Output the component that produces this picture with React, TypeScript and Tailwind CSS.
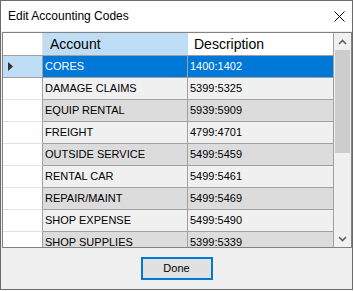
import React from "react";

// rows shown in the accounting codes grid
const rows = [
  { account: "CORES", desc: "1400:1402" },
  { account: "DAMAGE CLAIMS", desc: "5399:5325" },
  { account: "EQUIP RENTAL", desc: "5939:5909" },
  { account: "FREIGHT", desc: "4799:4701" },
  { account: "OUTSIDE SERVICE", desc: "5499:5459" },
  { account: "RENTAL CAR", desc: "5499:5461" },
  { account: "REPAIR/MAINT", desc: "5499:5469" },
  { account: "SHOP EXPENSE", desc: "5499:5490" },
  { account: "SHOP SUPPLIES", desc: "5399:5339" },
];

function Chevron({ down }: { down?: boolean }) {
  return (
    <svg width="9" height="6" viewBox="0 0 9 6">
      <polyline
        points={down ? "1,1 4.5,4.5 8,1" : "1,5 4.5,1.5 8,5"}
        fill="none"
        stroke="#606060"
        strokeWidth="1.6"
      />
    </svg>
  );
}

export default function App() {
  return (
    <div className="w-[354px] h-[291px] bg-white font-['Liberation_Sans',Arial,sans-serif]">
      <div className="w-[353px] h-[290px] border border-[#6b6b6b] bg-[#f0f0f0] flex flex-col">
        {/* title bar */}
        <div className="h-[30px] bg-white flex items-center justify-between pl-[7px] pr-[7px] shrink-0">
          <span className="text-[12px] text-black leading-none">Edit Accounting Codes</span>
          <svg width="11" height="11" viewBox="0 0 11 11">
            <path d="M0.5 0.5 L10.5 10.5 M10.5 0.5 L0.5 10.5" stroke="#000" strokeWidth="1" />
          </svg>
        </div>

        {/* grid */}
        <div className="mt-[1px] ml-[1px] h-[216px] w-[350px] border border-[#828282] bg-[#f0f0f0] flex shrink-0">
          <div className="w-[331px] h-full overflow-hidden">
            {/* header */}
            <div className="flex h-[23px] border-b border-[#a0a0a0] text-[14px] text-black">
              <div className="w-[40px] bg-white border-r border-[#e3e3e3]" />
              <div className="w-[145px] bg-[#bfddf5] border-r border-[#bfddf5] pl-[7px] flex items-center">
                Account
              </div>
              <div className="w-[146px] bg-white border-r border-[#a0a0a0] pl-[6px] flex items-center">
                Description
              </div>
            </div>
            {rows.map((r, i) => {
              const selected = i === 0;
              const bg = selected ? "bg-[#0078d7] text-white" : i % 2 === 0 ? "bg-[#dcdcdc] text-black" : "bg-[#f0f0f0] text-black";
              return (
                <div key={r.account} className="flex h-[22px] text-[11px]">
                  <div
                    className={`w-[40px] border-r border-[#a0a0a0] border-b flex items-center pl-[5px] ${
                      selected ? "bg-[#bfddf5] border-b-[#a0a0a0]" : "bg-white border-b-[#e3e3e3]"
                    }`}
                  >
                    {selected && (
                      <svg width="5" height="9" viewBox="0 0 5 9">
                        <path d="M0 0 L5 4.5 L0 9 Z" fill="#333" />
                      </svg>
                    )}
                  </div>
                  <div className={`w-[145px] border-r border-b border-[#a0a0a0] pl-[2px] flex items-center ${bg}`}>
                    {r.account}
                  </div>
                  <div className={`w-[146px] border-r border-b border-[#a0a0a0] pl-[2px] flex items-center ${bg}`}>
                    {r.desc}
                  </div>
                </div>
              );
            })}
          </div>

          {/* vertical scrollbar */}
          <div className="w-[17px] h-full bg-[#f0f0f0] flex flex-col">
            <div className="h-[17px] flex items-center justify-center shrink-0">
              <Chevron />
            </div>
            <div className="flex-1 flex flex-col px-[1px] pt-[0px]">
              <div className="h-[103px] bg-[#cdcdcd]" />
            </div>
            <div className="h-[17px] flex items-center justify-center shrink-0">
              <Chevron down />
            </div>
          </div>
        </div>

        {/* footer */}
        <div className="flex-1 flex items-center justify-center">
          <button className="w-[72px] h-[23px] border-2 border-[#0078d7] bg-[#e1e1e1] text-[11px] text-black leading-none">
            Done
          </button>
        </div>
      </div>
    </div>
  );
}
